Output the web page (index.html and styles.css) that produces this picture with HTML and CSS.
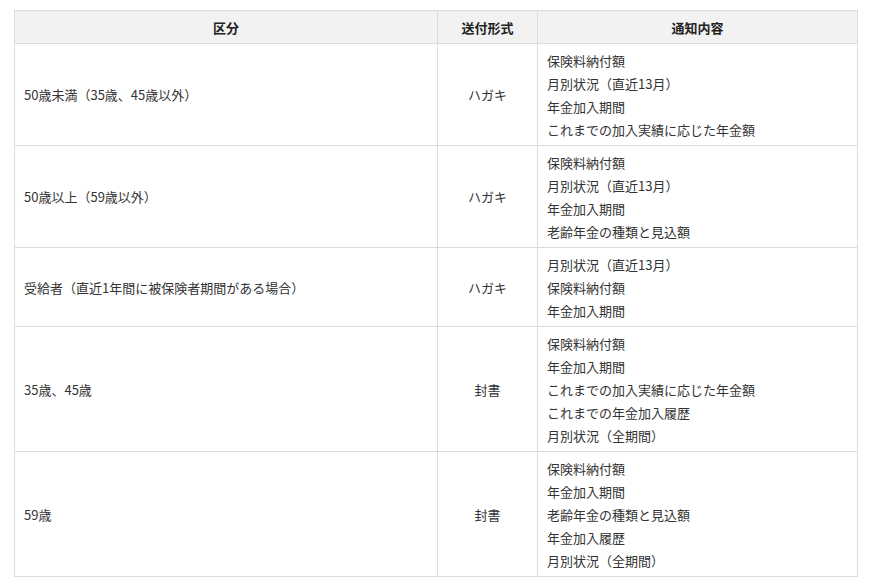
FILE: index.html
```html
<!DOCTYPE html>
<html lang="ja">
<head>
<meta charset="utf-8">
<link rel="stylesheet" href="styles.css">
</head>
<body>
<table class="notice-table">
  <colgroup>
    <col class="c1"><col class="c2"><col class="c3">
  </colgroup>
  <thead>
    <tr><th>区分</th><th>送付形式</th><th>通知内容</th></tr>
  </thead>
  <tbody>
    <tr>
      <td>50歳未満（35歳、45歳以外）</td>
      <td class="center">ハガキ</td>
      <td>保険料納付額<br>月別状況（直近13月）<br>年金加入期間<br>これまでの加入実績に応じた年金額</td>
    </tr>
    <tr>
      <td>50歳以上（59歳以外）</td>
      <td class="center">ハガキ</td>
      <td>保険料納付額<br>月別状況（直近13月）<br>年金加入期間<br>老齢年金の種類と見込額</td>
    </tr>
    <tr>
      <td>受給者（直近1年間に被保険者期間がある場合）</td>
      <td class="center">ハガキ</td>
      <td>月別状況（直近13月）<br>保険料納付額<br>年金加入期間</td>
    </tr>
    <tr>
      <td>35歳、45歳</td>
      <td class="center">封書</td>
      <td>保険料納付額<br>年金加入期間<br>これまでの加入実績に応じた年金額<br>これまでの年金加入履歴<br>月別状況（全期間）</td>
    </tr>
    <tr>
      <td>59歳</td>
      <td class="center">封書</td>
      <td>保険料納付額<br>年金加入期間<br>老齢年金の種類と見込額<br>年金加入履歴<br>月別状況（全期間）</td>
    </tr>
  </tbody>
</table>
</body>
</html>
```

FILE: styles.css
```css
html, body {
  margin: 0;
  padding: 0;
  background: #fff;
}
body {
  padding: 10px 0 0 14px;
  font-family: "Noto Sans CJK JP", "Noto Sans", sans-serif;
  font-size: 13px;
  color: #333;
}
.notice-table {
  border-collapse: collapse;
  width: 843px;
  table-layout: fixed;
}
.c1 { width: 423px; }
.c2 { width: 100px; }
.c3 { width: 320px; }
.notice-table th,
.notice-table td {
  border: 1px solid #dcdcdc;
  padding: 4.5px 9px;
  line-height: 23px;
  vertical-align: middle;
  text-align: left;
}
.notice-table th {
  background: #f2f2f2;
  font-weight: bold;
  text-align: center;
  color: #222;
}
.notice-table td.center {
  text-align: center;
}
```
